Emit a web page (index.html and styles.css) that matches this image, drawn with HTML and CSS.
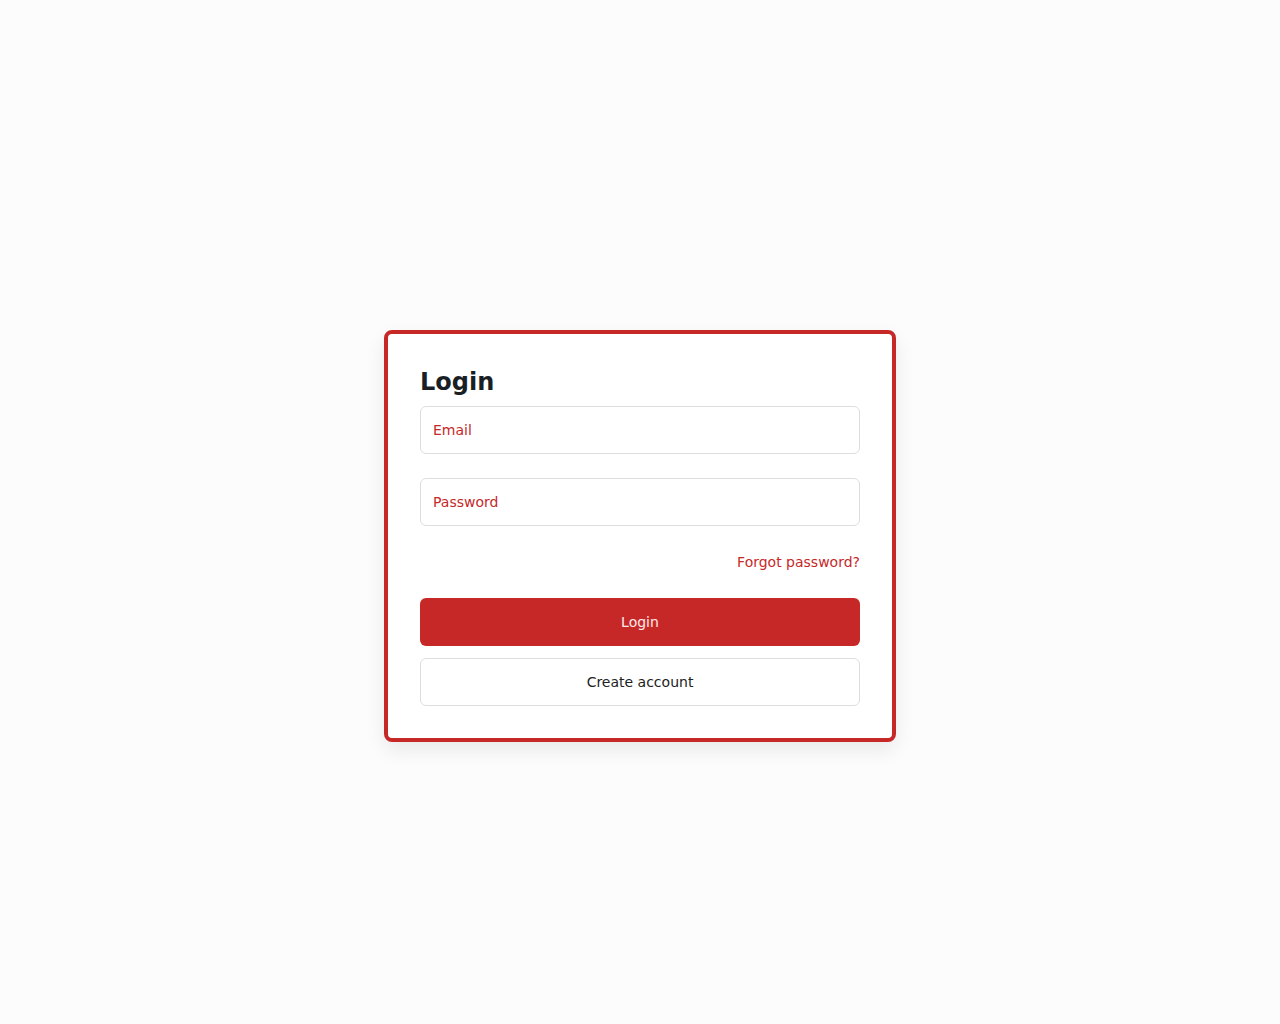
FILE: index.html
```html
<!DOCTYPE html>
<html lang="en">
<head>
    <meta charset="UTF-8">
    <meta name="viewport" content="width=device-width, initial-scale=1.0">
    <title>Login</title>

    <link rel="stylesheet" href="styles.css">
</head>
<body>

    <main class="page">
        <form class="login-card" onsubmit="return false">
            <h1>Login</h1>
            <input type="email" class="field" placeholder="Email">
            <input type="password" class="field" placeholder="Password">
            <a href="#" class="forgot">Forgot password?</a>
            <div class="actions">
                <button type="submit" class="btn btn-primary">Login</button>
                <button type="button" class="btn btn-secondary">Create account</button>
            </div>
        </form>
    </main>

</body>
</html>
```

FILE: styles.css
```css
body {
    font-family: "DejaVu Sans", Verdana, sans-serif;
    margin: 0;
    padding: 0;
    background-color: #fcfcfc;
}

.page {
    min-height: 100vh;
    box-sizing: border-box;
    padding-top: 48px;
    display: flex;
    align-items: center;
    justify-content: center;
}

.login-card {
    width: 512px;
    box-sizing: border-box;
    padding: 32px;
    background-color: #fff;
    border: 4px solid #c62828;
    border-radius: 8px;
    box-shadow: 0 8px 20px rgba(0, 0, 0, 0.08);
    display: flex;
    flex-direction: column;
    gap: 24px;
}

h1 {
    margin: 0 0 -16px;
    padding-top: 1px;
    font-size: 24px;
    line-height: 31px;
    color: #1a1f26;
}

.field {
    height: 48px;
    box-sizing: border-box;
    padding: 0 12px;
    border: 1px solid #dedede;
    border-radius: 6px;
    font-family: inherit;
    font-size: 14px;
    color: #222;
    background-color: #fff;
}

.field::placeholder {
    color: #c62828;
}

.forgot {
    align-self: flex-end;
    padding-top: 1px;
    font-size: 14px;
    line-height: 23px;
    color: #c62828;
    text-decoration: none;
}

.actions {
    display: flex;
    flex-direction: column;
    gap: 12px;
}

.btn {
    height: 48px;
    border-radius: 6px;
    font-family: inherit;
    font-size: 14px;
    cursor: pointer;
}

.btn-primary {
    background-color: #c62828;
    color: #fbeaea;
    border: none;
}

.btn-secondary {
    background-color: #fff;
    color: #222;
    border: 1px solid #dedede;
}
```
